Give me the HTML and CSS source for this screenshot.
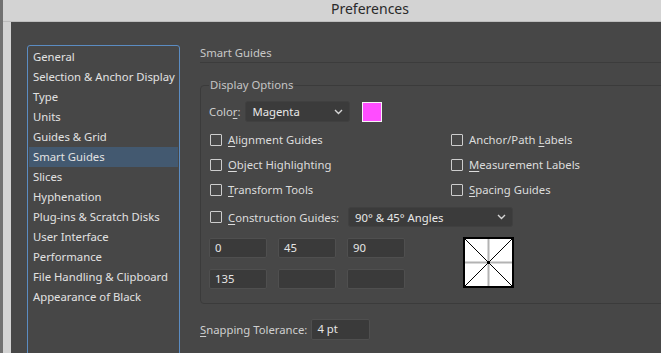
FILE: index.html
```html
<!DOCTYPE html>
<html lang="en">
<head>
    <meta charset="UTF-8">
    <meta name="viewport" content="width=device-width, initial-scale=1.0">
    <title>Preferences</title>
    <link rel="stylesheet" href="styles.css">
</head>
<body>
    <div class="titlebar">Preferences</div>

    <div class="dialog">
        <ul class="sections">
            <li>General</li>
            <li>Selection &amp; Anchor Display</li>
            <li>Type</li>
            <li>Units</li>
            <li>Guides &amp; Grid</li>
            <li class="selected">Smart Guides</li>
            <li>Slices</li>
            <li>Hyphenation</li>
            <li>Plug-ins &amp; Scratch Disks</li>
            <li>User Interface</li>
            <li>Performance</li>
            <li>File Handling &amp; Clipboard</li>
            <li>Appearance of Black</li>
        </ul>

        <div class="pane">
            <h2 class="pane-title">Smart Guides</h2>

            <fieldset class="group">
                <legend>Display Options</legend>

                <div class="color-row">
                    <span class="label">Colo<u>r</u>:</span>
                    <div class="select select-color">
                        <span>Magenta</span>
                        <svg class="chevron" width="9" height="6" viewBox="0 0 9 6"><path d="M1 1 L4.5 4.5 L8 1" fill="none" stroke="#d6d6d6" stroke-width="1.4"/></svg>
                    </div>
                    <span class="swatch"></span>
                </div>

                <div class="checks">
                    <label class="check"><span class="box"></span><span><u>A</u>lignment Guides</span></label>
                    <label class="check"><span class="box"></span><span>Anchor/Path <u>L</u>abels</span></label>
                    <label class="check"><span class="box"></span><span><u>O</u>bject Highlighting</span></label>
                    <label class="check"><span class="box"></span><span><u>M</u>easurement Labels</span></label>
                    <label class="check"><span class="box"></span><span><u>T</u>ransform Tools</span></label>
                    <label class="check"><span class="box"></span><span><u>S</u>pacing Guides</span></label>
                </div>

                <div class="construction">
                    <label class="check"><span class="box"></span><span><u>C</u>onstruction Guides:</span></label>
                    <div class="select select-angles">
                        <span>90° &amp; 45° Angles</span>
                        <svg class="chevron" width="9" height="6" viewBox="0 0 9 6"><path d="M1 1 L4.5 4.5 L8 1" fill="none" stroke="#d6d6d6" stroke-width="1.4"/></svg>
                    </div>
                </div>

                <div class="angles-row">
                    <div class="angles">
                        <div class="field">0</div>
                        <div class="field">45</div>
                        <div class="field">90</div>
                        <div class="field">135</div>
                        <div class="field"></div>
                        <div class="field"></div>
                    </div>
                    <svg class="preview" width="51" height="51" viewBox="0 0 51 51">
                        <rect x="1" y="1" width="49" height="49" fill="#fff" stroke="#000" stroke-width="2"/>
                        <line x1="25.5" y1="2" x2="25.5" y2="49" stroke="#b3b3b3" stroke-width="2"/>
                        <line x1="2" y1="25.5" x2="49" y2="25.5" stroke="#b3b3b3" stroke-width="2"/>
                        <line x1="2" y1="2" x2="49" y2="49" stroke="#000" stroke-width="1"/>
                        <line x1="49" y1="2" x2="2" y2="49" stroke="#000" stroke-width="1"/>
                        <rect x="24" y="24" width="3" height="3" fill="#000"/>
                    </svg>
                </div>
            </fieldset>

            <div class="snap-row">
                <span class="label"><u>S</u>napping Tolerance:</span>
                <div class="field field-snap">4 pt</div>
            </div>
        </div>
    </div>
</body>
</html>
```

FILE: styles.css
```css
html, body {
    height: 100%;
}

body {
    margin: 0;
    overflow: hidden;
    background-color: #d3d3d3;
    border-left: 3px solid #707070;   /*bordo scuro della finestra*/
    font-family: "Noto Sans", sans-serif;
    font-size: 11.3px;
    color: #dcdcdc;
    display: flex;
    flex-direction: column;
}

.titlebar {
    height: 22px;
    flex: none;
    padding-left: 328px;
    line-height: 17px;
    font-size: 14px;
    color: #2a2a2a;
    border-bottom: 1px solid #bdbdbd;
    box-sizing: border-box;
}

.dialog {
    flex: 1;
    min-height: 0;
    overflow: hidden;   /*la lista e il gruppo continuano oltre il bordo*/
    margin-left: 8px;
    background-color: #474747;
    display: flex;
    padding: 23px 0 0 16px;
}

.sections {
    list-style: none;
    margin: 0;
    padding: 1px;
    width: 149px;
    height: 330px;
    flex: none;
    border: 1px solid #5b8cc2;
    border-radius: 3px;
}

.sections li {
    height: 20px;
    line-height: 19px;
    padding-left: 4px;
    white-space: nowrap;
    color: #e2e2e2;
}

.sections .selected {
    background-color: #435970;
}

.pane {
    flex: none;
    width: 520px;
    margin-left: 20px;
}

.pane-title {
    margin: 0;
    font-size: 11.3px;
    font-weight: normal;
    line-height: 16px;
    height: 17px;
    color: #c8c8c8;
    border-bottom: 1px solid #3c3c3c;
    margin-bottom: 14px;
}

.group {
    margin: 0;
    padding: 8px 8px 14px 8px;
    border: 1px solid #3b3b3b;
    border-radius: 4px;
    width: 500px;
}

.group legend {
    padding: 0 1px;
    line-height: 16px;
    color: #c4c4c4;
}

u {
    text-decoration-thickness: 1px;
    text-underline-offset: 2px;
}

.color-row {
    display: flex;
    align-items: center;
    height: 21px;
}

.label {
    color: #cfcfcf;
}

.select {
    display: flex;
    align-items: center;
    justify-content: space-between;
    box-sizing: border-box;
    height: 21px;
    padding: 0 6px 0 6px;
    background-color: #3b3b3b;
    border: 1px solid #404040;
    border-radius: 3px;
    color: #e8e8e8;
}

.select-color {
    width: 105px;
    margin-left: 5px;
}

.swatch {
    width: 18px;
    height: 18px;
    margin-left: 12px;
    background-color: #ff4dff;
    border: 1px solid #f4f4f4;
}

.checks {
    display: grid;
    grid-template-columns: 241px 1fr;
    margin-top: 5px;
}

.check {
    display: flex;
    align-items: center;
    height: 25px;
    padding-left: 1px;
    color: #dcdcdc;
    white-space: nowrap;
}

.box {
    width: 10px;
    height: 10px;
    border: 1px solid #cdcdcd;
    border-radius: 1px;
    margin-right: 6px;
    flex: none;
}

.construction {
    display: flex;
    align-items: center;
    margin-top: 5px;
    height: 20px;
}

.construction .check {
    height: 20px;
    width: 138px;
}

.select-angles {
    width: 165px;
    height: 20px;
}

.angles-row {
    display: flex;
    align-items: flex-start;
    margin-top: 10px;
}

.angles {
    display: grid;
    grid-template-columns: repeat(3, 58px);
    column-gap: 11px;
    row-gap: 11px;
    margin-top: 1px;
}

.field {
    box-sizing: border-box;
    height: 20px;
    line-height: 18px;
    padding-left: 5px;
    background-color: #3a3a3a;
    border: 1px solid #4f4f4f;
    border-radius: 2px;
    color: #e6e6e6;
}

.preview {
    margin-left: 58px;
    display: block;
}

.snap-row {
    display: flex;
    align-items: center;
    margin-top: 15px;
    height: 21px;
}

.field-snap {
    width: 59px;
    height: 21px;
    margin-left: 4px;
}
```
